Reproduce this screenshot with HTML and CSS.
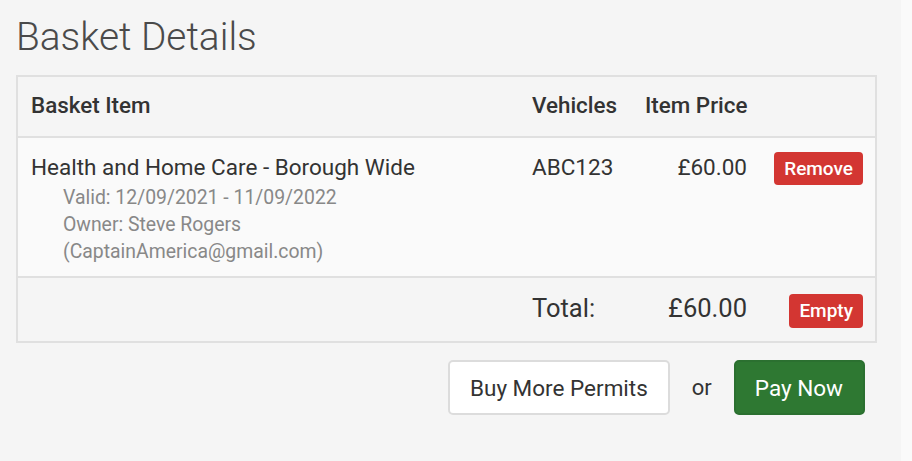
FILE: index.html
```html
<!DOCTYPE html>
<html lang="en">
<head>
<meta charset="utf-8">
<title>Basket Details</title>
<link rel="stylesheet" href="styles.css">
</head>
<body>
<div class="page">
  <h1 class="title">Basket Details</h1>
  <div class="basket">
    <div class="row head">
      <div class="cell">Basket Item</div>
      <div class="cell">Vehicles</div>
      <div class="cell">Item Price</div>
      <div class="cell"></div>
    </div>
    <div class="row item">
      <div class="cell">
        <div class="name">Health and Home Care - Borough Wide</div>
        <div class="meta">
          <div>Valid: 12/09/2021 - 11/09/2022</div>
          <div>Owner: Steve Rogers</div>
          <div>(CaptainAmerica@gmail.com)</div>
        </div>
      </div>
      <div class="cell vrm">ABC123</div>
      <div class="cell price">£60.00</div>
      <div class="cell action"><button class="btn-danger">Remove</button></div>
    </div>
    <div class="row foot">
      <div class="cell"></div>
      <div class="cell total-label">Total:</div>
      <div class="cell price total">£60.00</div>
      <div class="cell action"><button class="btn-danger">Empty</button></div>
    </div>
  </div>
  <div class="actions">
    <button class="btn-default">Buy More Permits</button>
    <span class="or">or</span>
    <button class="btn-success">Pay Now</button>
  </div>
</div>
</body>
</html>
```

FILE: styles.css
```css
html, body {
  margin: 0;
  padding: 0;
}
body {
  background: #fafafa;
  font-family: Roboto, "Liberation Sans", Arial, sans-serif;
  color: #333;
}
.page {
  width: 901px;
  height: 461px;
  box-sizing: border-box;
  background: #f5f5f5;
  padding: 15px 0 0 16px;
}
.title {
  margin: 0 0 16px 0;
  font-weight: 300;
  font-size: 38.8px;
  line-height: 44px;
  color: #4a4a4a;
}
.basket {
  width: 861px;
  border: 2px solid #e0e0e0;
  box-sizing: border-box;
}
.row {
  display: grid;
  grid-template-columns: 1fr 113px 102px 116px;
  padding: 0 12px 0 13px;
}
.cell {
  white-space: nowrap;
}
.head {
  height: 59px;
  box-sizing: content-box;
  align-items: center;
  background: #f5f5f5;
  font-size: 22.4px;
  font-weight: 500;
  color: #333;
  border-bottom: 2px solid #e0e0e0;
}
.head .cell {
  margin-top: -3px;
}
.item {
  background: #fafafa;
  padding-top: 15px;
  padding-bottom: 11px;
  border-bottom: 2px solid #e0e0e0;
  align-items: start;
}
.name {
  font-size: 22.5px;
  line-height: 28px;
  color: #333;
}
.meta {
  margin: 3px 0 0 32px;
  font-size: 19.4px;
  line-height: 27px;
  color: #888;
}
.vrm, .price {
  font-size: 22.5px;
  line-height: 28px;
}
.price {
  text-align: right;
}
.action {
  display: flex;
  justify-content: flex-end;
}
.item .action {
  margin-top: -1px;
}
.btn-danger {
  border: 0;
  border-radius: 4px;
  background: #d33632;
  color: #fff;
  font-family: inherit;
  font-size: 19px;
  font-weight: 500;
  line-height: 33px;
  height: 33px;
  padding: 0 10px;
}
.foot {
  height: 63px;
  align-items: center;
  background: #f5f5f5;
}
.total-label, .total {
  font-size: 25.5px;
  color: #333;
  margin-top: -3px;
}
.foot .btn-danger {
  height: 34px;
  margin-top: 2px;
}
.actions {
  width: 849px;
  display: flex;
  justify-content: flex-end;
  align-items: center;
  gap: 22px;
  margin-top: 17px;
}
.btn-default, .btn-success {
  height: 55px;
  font-family: inherit;
  font-size: 22.5px;
  border-radius: 5px;
  padding: 0 20px;
}
.btn-default {
  background: #fff;
  border: 2px solid #dcdcdc;
  color: #333;
  padding: 0 20px;
}
.btn-success {
  background: #2e7832;
  border: 2px solid #2b7030;
  color: #fff;
  padding: 0 20px 0 19px;
}
.or {
  font-size: 22px;
  color: #333;
}
```
